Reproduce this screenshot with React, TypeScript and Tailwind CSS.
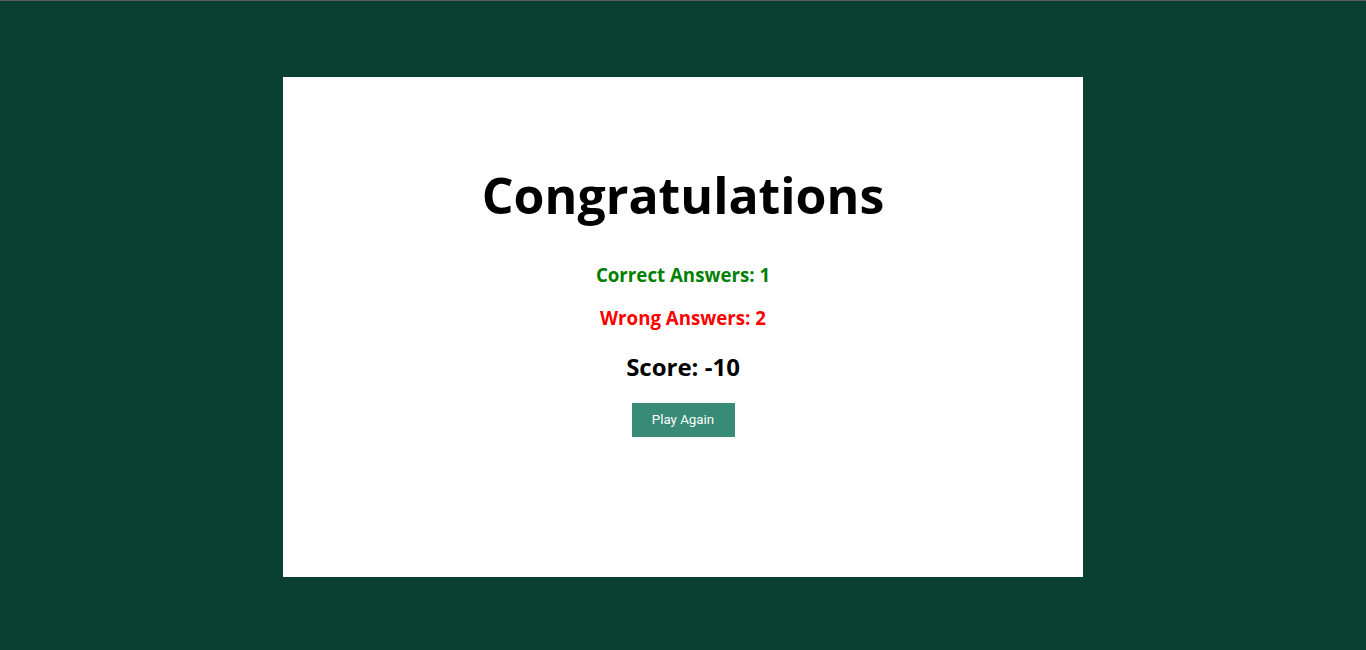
import React from 'react';

const App: React.FC = () => {
  return (
    <div className="min-h-[650px] bg-[#0a4030] border-t border-[#5c5c68] flex justify-center pt-[76px]" style={{ fontFamily: '"Open Sans", sans-serif' }}>
      <div className="w-[800px] h-[500px] bg-white flex flex-col items-center pt-[86px]">
        <h1 className="text-[50px] font-bold leading-[64px] text-black">Congratulations</h1>
        <p className="mt-[35px] text-[18.7px] font-bold text-[#008000] leading-[26px]">Correct Answers: 1</p>
        <p className="mt-[17px] text-[18.7px] font-bold text-[#ff0000] leading-[26px]">Wrong Answers: 2</p>
        <p className="mt-[20px] text-[24px] font-bold text-black leading-[32px]">Score: -10</p>
        <button className="mt-[20px] w-[103px] h-[34px] bg-[#388b77] text-white text-[13.3px]" style={{ fontFamily: 'Roboto, sans-serif' }}>
          Play Again
        </button>
      </div>
    </div>
  );
};

export default App;
